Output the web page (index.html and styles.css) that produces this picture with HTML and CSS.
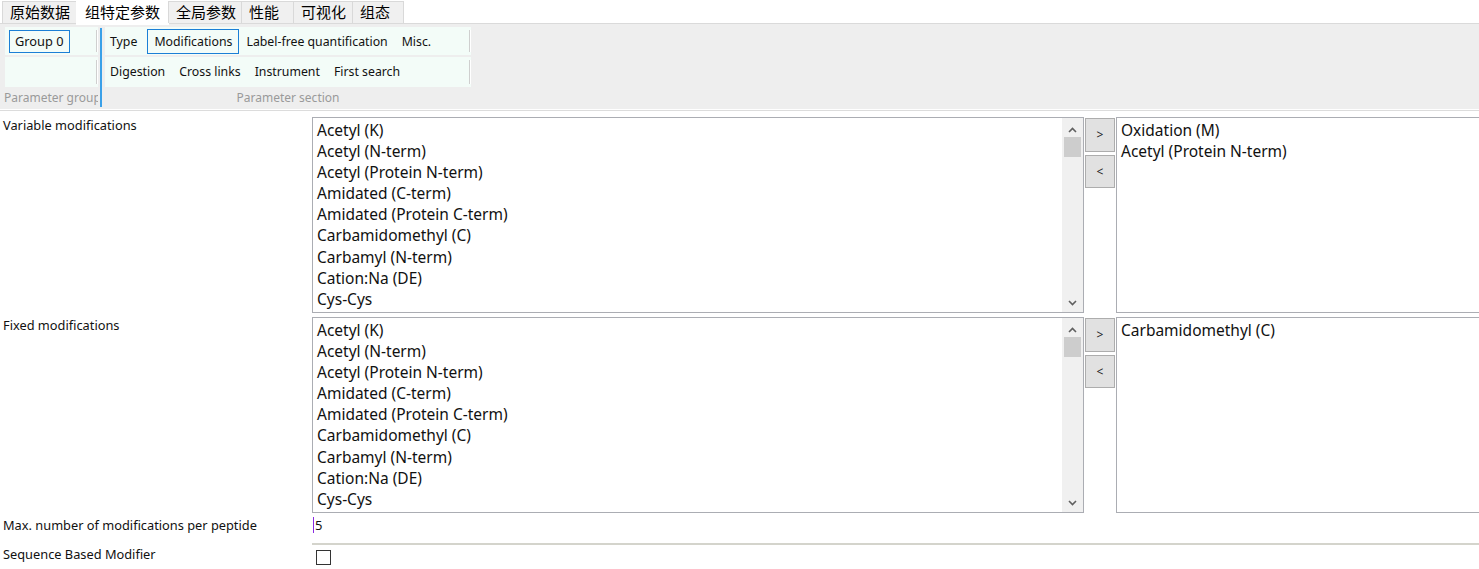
FILE: index.html
```html
<!DOCTYPE html>
<html lang="zh">
<head>
<meta charset="utf-8">
<title>Parameters</title>
<link rel="stylesheet" href="styles.css">
</head>
<body>
<div class="tabs">
  <div class="tab tw1">原始数据</div>
  <div class="tab active tw2">组特定参数</div>
  <div class="tab tw3">全局参数</div>
  <div class="tab tw4">性能</div>
  <div class="tab tw5">可视化</div>
  <div class="tab tw6">组态</div>
</div>
<div class="ribbon">
  <div class="rgroup gp">
    <div class="rrow"><span class="rbtn sel small">Group 0</span><i class="rsep"></i></div>
    <div class="rrow"><i class="rsep"></i></div>
    <div class="rlabel left">Parameter group</div>
  </div>
  <div class="vline"></div>
  <div class="rgroup gs">
    <div class="rrow"><span class="rbtn">Type</span><span class="rbtn sel mods">Modifications</span><span class="rbtn">Label-free quantification</span><span class="rbtn">Misc.</span><i class="rsep"></i></div>
    <div class="rrow"><span class="rbtn">Digestion</span><span class="rbtn">Cross links</span><span class="rbtn">Instrument</span><span class="rbtn">First search</span><i class="rsep"></i></div>
    <div class="rlabel">Parameter section</div>
  </div>
</div>
<div class="rule"></div>
<div class="form">
  <div class="flabel">Variable modifications</div>
  <div class="list">
    <div class="items">
      <div>Acetyl (K)</div><div>Acetyl (N-term)</div><div>Acetyl (Protein N-term)</div><div>Amidated (C-term)</div><div>Amidated (Protein C-term)</div><div>Carbamidomethyl (C)</div><div>Carbamyl (N-term)</div><div>Cation:Na (DE)</div><div>Cys-Cys</div>
    </div>
    <div class="vscroll">
      <svg class="arr" width="9" height="6" viewBox="0 0 9 6"><polyline points="1,5 4.5,1.5 8,5" fill="none" stroke="#606060" stroke-width="1.6"/></svg>
      <div class="thumb"></div>
      <div class="track"></div>
      <svg class="arr" width="9" height="6" viewBox="0 0 9 6"><polyline points="1,1 4.5,4.5 8,1" fill="none" stroke="#606060" stroke-width="1.6"/></svg>
    </div>
  </div>
  <div class="movebtns"><span class="mbtn">&gt;</span><span class="mbtn">&lt;</span></div>
  <div class="list chosen">
    <div class="items"><div>Oxidation (M)</div><div>Acetyl (Protein N-term)</div></div>
  </div>

  <div class="flabel">Fixed modifications</div>
  <div class="list">
    <div class="items">
      <div>Acetyl (K)</div><div>Acetyl (N-term)</div><div>Acetyl (Protein N-term)</div><div>Amidated (C-term)</div><div>Amidated (Protein C-term)</div><div>Carbamidomethyl (C)</div><div>Carbamyl (N-term)</div><div>Cation:Na (DE)</div><div>Cys-Cys</div>
    </div>
    <div class="vscroll">
      <svg class="arr" width="9" height="6" viewBox="0 0 9 6"><polyline points="1,5 4.5,1.5 8,5" fill="none" stroke="#606060" stroke-width="1.6"/></svg>
      <div class="thumb"></div>
      <div class="track"></div>
      <svg class="arr" width="9" height="6" viewBox="0 0 9 6"><polyline points="1,1 4.5,4.5 8,1" fill="none" stroke="#606060" stroke-width="1.6"/></svg>
    </div>
  </div>
  <div class="movebtns"><span class="mbtn">&gt;</span><span class="mbtn">&lt;</span></div>
  <div class="list chosen">
    <div class="items"><div>Carbamidomethyl (C)</div></div>
  </div>

  <div class="flabel">Max. number of modifications per peptide</div>
  <div class="numfield"><span class="caret"></span>5</div>

  <div class="flabel last">Sequence Based Modifier</div>
  <div class="checkcell"><span class="checkbox"></span></div>
</div>
</body>
</html>
```
FILE: styles.css
```css
html, body {
  margin: 0;
  padding: 0;
  background: #ffffff;
  overflow: hidden;
}
body {
  width: 1479px;
  height: 569px;
  font-family: "Noto Sans", "Liberation Sans", sans-serif;
  color: #000;
}

/* tabs */
.tabs {
  display: flex;
  align-items: flex-end;
  height: 23px;
  padding-left: 2px;
  position: relative;
  z-index: 2;
}
.tab {
  box-sizing: border-box;
  height: 22px;
  background: #f0f0f0;
  border: 1px solid #d9d9d9;
  border-bottom: none;
  margin-right: -1px;
  font-family: "Noto Sans CJK SC", sans-serif;
  font-size: 15px;
  line-height: 20px;
  padding-left: 7px;
  color: #000;
  white-space: nowrap;
}
.tab.active {
  background: #ffffff;
  height: 25px;
  margin-bottom: -2px;
  padding-left: 8px;
  line-height: 22px;
  border-color: #ffffff;
}
.tw1 { width: 75px; }
.tw2 { width: 93px; }
.tw3 { width: 74px; }
.tw4 { width: 53px; }
.tw5 { width: 60px; }
.tw6 { width: 52px; }

/* ribbon */
.ribbon {
  display: flex;
  height: 82px;
  background: #eeeeee;
  border-top: 1px solid #dadada;
  padding: 3px 0 0 5px;
  box-sizing: content-box;
}
.rgroup {
  display: flex;
  flex-direction: column;
  gap: 2px;
}
.gp { width: 93px; }
.gs { width: 366px; margin-left: 3px; }
.rrow {
  display: flex;
  align-items: center;
  height: 28px;
  background: #f3fcf8;
  padding-left: 4px;
  position: relative;
}
.rrow + .rrow { height: 30px; padding-bottom: 2px; box-sizing: border-box; }
.gs .rrow { padding-left: 0; gap: 0; }
.gs .rrow .rbtn:first-child { margin-left: -2px; }
.rsep {
  position: absolute;
  right: 0;
  top: 3px;
  bottom: 3px;
  width: 2px;
  background: #cfcfcf;
  border-right: 1px solid #ffffff;
  box-sizing: border-box;
}
.rbtn {
  font-size: 12.3px;
  line-height: 17px;
  padding: 3px 6px;
  border: 1px solid transparent;
  white-space: nowrap;
  color: #111;
}
.rbtn.sel {
  border-color: #1b7fd6;
}
.rbtn.mods {
  margin-left: 3px;
  margin-right: 0;
}
.rbtn.small {
  padding: 2px 5px;
  font-size: 12.8px;
}
.rlabel {
  font-size: 12px;
  color: #9a9a9a;
  text-align: center;
  line-height: 16px;
  margin-top: 1px;
  white-space: nowrap;
}
.rlabel.left {
  text-align: left;
  margin-left: -1px;
  overflow-x: clip;
}
.vline {
  width: 2px;
  background: #3aa0e8;
  margin-left: 2px;
  height: 79px;
  margin-top: 1px;
}

.rule {
  height: 1px;
  background: #dcdcdc;
  margin-top: 1px;
}

/* form */
.form {
  display: grid;
  grid-template-columns: 312px 772px 32px 1fr;
  grid-template-rows: 196px 196px 28px auto;
  row-gap: 4px;
  margin-top: 6px;
}
.flabel {
  font-size: 12.8px;
  line-height: 16px;
  padding-left: 3px;
  color: #111;
  white-space: nowrap;
}
.flabel.last { margin-top: -3px; }
.list {
  box-sizing: border-box;
  border: 1px solid #abadb3;
  display: flex;
  background: #fff;
}
.list.chosen { border-right: none; }
.items {
  flex: 1;
  padding: 2px 0 0 4px;
  font-size: 15.5px;
  line-height: 21.1px;
  color: #111;
  overflow: hidden;
  white-space: nowrap;
}
.vscroll {
  width: 21px;
  background: #f0f0f0;
  display: flex;
  flex-direction: column;
  align-items: center;
}
.arr { flex: none; margin: 6px 0; }
.vscroll .arr:first-child { margin-top: 9px; margin-bottom: 4px; }
.thumb {
  width: 17px;
  height: 20px;
  background: #cdcdcd;
  flex: none;
}
.track { flex: 1; }
.movebtns {
  display: flex;
  flex-direction: column;
  gap: 3px;
  padding: 1px 0 0 1px;
}
.mbtn {
  box-sizing: border-box;
  width: 30px;
  height: 34px;
  background: #e1e1e1;
  border: 1px solid #adadad;
  font-size: 12px;
  text-align: center;
  line-height: 32px;
  color: #222;
}
.mbtn + .mbtn { height: 33px; }
.numfield {
  grid-column: 2 / 5;
  border-bottom: 2px solid #d4d4cc;
  font-size: 13px;
  line-height: 16px;
  padding-left: 3px;
  position: relative;
  color: #111;
}
.caret {
  position: absolute;
  left: 1px;
  top: 0;
  width: 1px;
  height: 16px;
  background: #8a2be2;
}
.checkcell {
  grid-column: 2 / 5;
  padding: 0 0 0 4px;
}
.checkbox {
  display: block;
  box-sizing: border-box;
  width: 15px;
  height: 15px;
  border: 1px solid #333;
  background: #fff;
  margin-top: 1px;
}
```
